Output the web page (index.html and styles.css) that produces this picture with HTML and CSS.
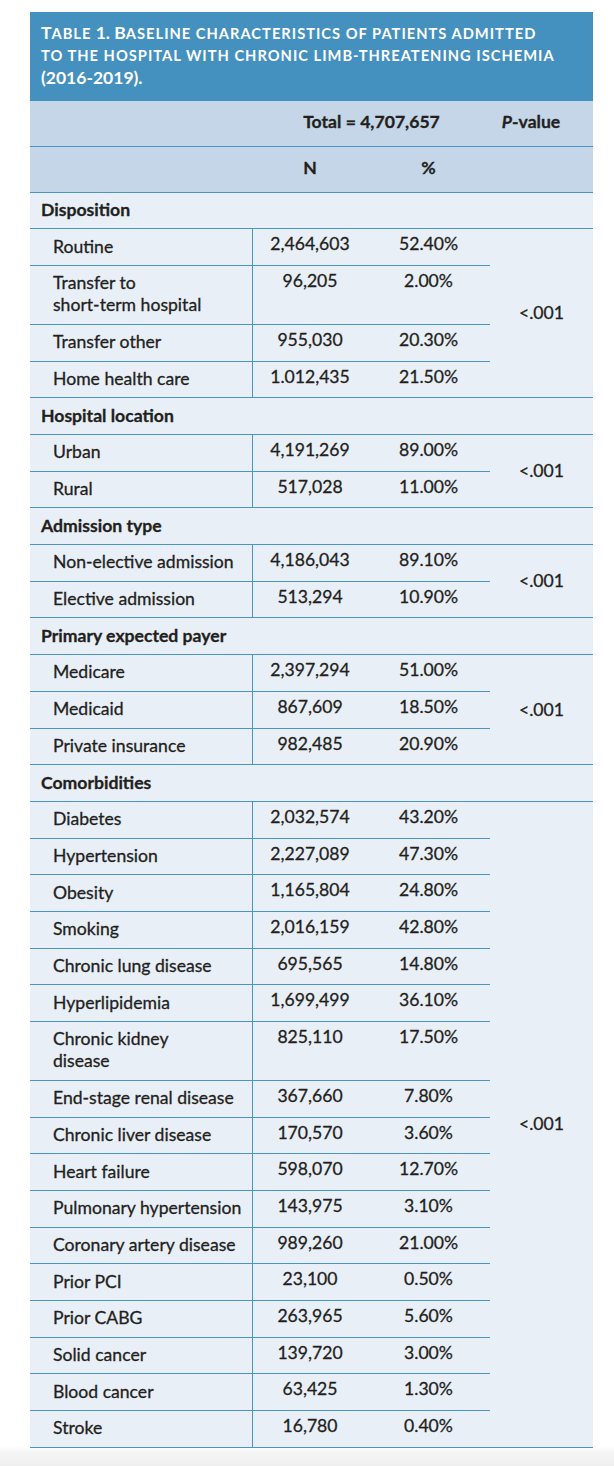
FILE: index.html
```html
<!DOCTYPE html>
<html lang="en">
<head>
<meta charset="utf-8">
<title>Table 1</title>
<link rel="stylesheet" href="styles.css">
</head>
<body>
<div class="card">
  <div class="title">T<span class="sc">able</span> 1. B<span class="sc">aseline characteristics of patients admitted</span><br><span class="sc">to the hospital with chronic limb-threatening ischemia</span><br>(2016-2019).</div>
  <table class="tbl">
    <colgroup>
      <col class="c-lab"><col class="c-n"><col class="c-pct"><col class="c-p">
    </colgroup>
    <thead>
      <tr class="hd">
        <td></td>
        <td colspan="2">Total = 4,707,657</td>
        <td class="pv"><i>P</i>-value</td>
      </tr>
      <tr class="hd">
        <td></td>
        <td>N</td>
        <td>%</td>
        <td></td>
      </tr>
    </thead>
    <tbody>
      <tr><td class="sec" colspan="4">Disposition</td></tr>
      <tr><td class="lab">Routine</td><td class="num">2,464,603</td><td class="num">52.40%</td><td class="p" rowspan="4">&lt;.001</td></tr>
      <tr><td class="lab">Transfer to<br>short-term hospital</td><td class="num">96,205</td><td class="num">2.00%</td></tr>
      <tr><td class="lab">Transfer other</td><td class="num">955,030</td><td class="num">20.30%</td></tr>
      <tr><td class="lab">Home health care</td><td class="num">1.012,435</td><td class="num">21.50%</td></tr>

      <tr><td class="sec" colspan="4">Hospital location</td></tr>
      <tr><td class="lab">Urban</td><td class="num">4,191,269</td><td class="num">89.00%</td><td class="p" rowspan="2">&lt;.001</td></tr>
      <tr><td class="lab">Rural</td><td class="num">517,028</td><td class="num">11.00%</td></tr>

      <tr><td class="sec" colspan="4">Admission type</td></tr>
      <tr><td class="lab">Non-elective admission</td><td class="num">4,186,043</td><td class="num">89.10%</td><td class="p" rowspan="2">&lt;.001</td></tr>
      <tr><td class="lab">Elective admission</td><td class="num">513,294</td><td class="num">10.90%</td></tr>

      <tr><td class="sec" colspan="4">Primary expected payer</td></tr>
      <tr><td class="lab">Medicare</td><td class="num">2,397,294</td><td class="num">51.00%</td><td class="p" rowspan="3">&lt;.001</td></tr>
      <tr><td class="lab">Medicaid</td><td class="num">867,609</td><td class="num">18.50%</td></tr>
      <tr><td class="lab">Private insurance</td><td class="num">982,485</td><td class="num">20.90%</td></tr>

      <tr><td class="sec" colspan="4">Comorbidities</td></tr>
      <tr><td class="lab">Diabetes</td><td class="num">2,032,574</td><td class="num">43.20%</td><td class="p" rowspan="17">&lt;.001</td></tr>
      <tr><td class="lab">Hypertension</td><td class="num">2,227,089</td><td class="num">47.30%</td></tr>
      <tr><td class="lab">Obesity</td><td class="num">1,165,804</td><td class="num">24.80%</td></tr>
      <tr><td class="lab">Smoking</td><td class="num">2,016,159</td><td class="num">42.80%</td></tr>
      <tr><td class="lab">Chronic lung disease</td><td class="num">695,565</td><td class="num">14.80%</td></tr>
      <tr><td class="lab">Hyperlipidemia</td><td class="num">1,699,499</td><td class="num">36.10%</td></tr>
      <tr><td class="lab">Chronic kidney<br>disease</td><td class="num">825,110</td><td class="num">17.50%</td></tr>
      <tr><td class="lab">End-stage renal disease</td><td class="num">367,660</td><td class="num">7.80%</td></tr>
      <tr><td class="lab">Chronic liver disease</td><td class="num">170,570</td><td class="num">3.60%</td></tr>
      <tr><td class="lab">Heart failure</td><td class="num">598,070</td><td class="num">12.70%</td></tr>
      <tr><td class="lab">Pulmonary hypertension</td><td class="num">143,975</td><td class="num">3.10%</td></tr>
      <tr><td class="lab">Coronary artery disease</td><td class="num">989,260</td><td class="num">21.00%</td></tr>
      <tr><td class="lab">Prior PCI</td><td class="num">23,100</td><td class="num">0.50%</td></tr>
      <tr><td class="lab">Prior CABG</td><td class="num">263,965</td><td class="num">5.60%</td></tr>
      <tr><td class="lab">Solid cancer</td><td class="num">139,720</td><td class="num">3.00%</td></tr>
      <tr><td class="lab">Blood cancer</td><td class="num">63,425</td><td class="num">1.30%</td></tr>
      <tr><td class="lab">Stroke</td><td class="num">16,780</td><td class="num">0.40%</td></tr>
    </tbody>
  </table>
</div>
</body>
</html>
```

FILE: styles.css
```css
* { box-sizing: border-box; }
html, body { margin: 0; padding: 0; }
body {
  min-height: 1466px;
  background: linear-gradient(to bottom, #ffffff 0, #ffffff 1446px, #f6f6f6 1452px, #efefef 1466px);
  font-family: Lato, "Noto Sans", sans-serif;
  color: #231f20;
}
.card {
  margin: 12px 0 0 30px;
  width: 563px;
}
.title {
  background: #4490bf;
  color: #ffffff;
  font-weight: 700;
  font-size: 17.5px;
  line-height: 22.5px;
  padding: 9.6px 8px 11.6px 11px;
}
.sc {
  font-size: 0.84em;
  text-transform: uppercase;
  letter-spacing: 0.068em;
}
.tbl {
  width: 563px;
  border-spacing: 0;
  table-layout: fixed;
  background: #e9eff7;
  font-size: 17.6px;
  line-height: 22px;
  -webkit-text-stroke: 0.3px #231f20;
}
.c-lab { width: 223px; }
.c-n { width: 114px; }
.c-pct { width: 123px; }
.c-p { width: 103px; }
.tbl td {
  padding: 0;
  vertical-align: top;
  border-bottom: 1px solid #4a94c6;
}
.tbl .hd td {
  background: #c4d6e7;
  font-weight: 700;
  text-align: center;
  padding: 10px 0 13px;
}
.tbl .hd .pv { padding-right: 21px; }
.tbl .sec {
  font-weight: 700;
  padding: 6.3px 12px 7.42px 11px;
}
.tbl .lab {
  padding: 6.3px 8px 7.42px 23px;
  border-right: 1px solid #4a94c6;
}
.tbl .num {
  text-align: center;
  padding-top: 4px;
}
.tbl .p {
  vertical-align: middle;
  text-align: center;
}
```
